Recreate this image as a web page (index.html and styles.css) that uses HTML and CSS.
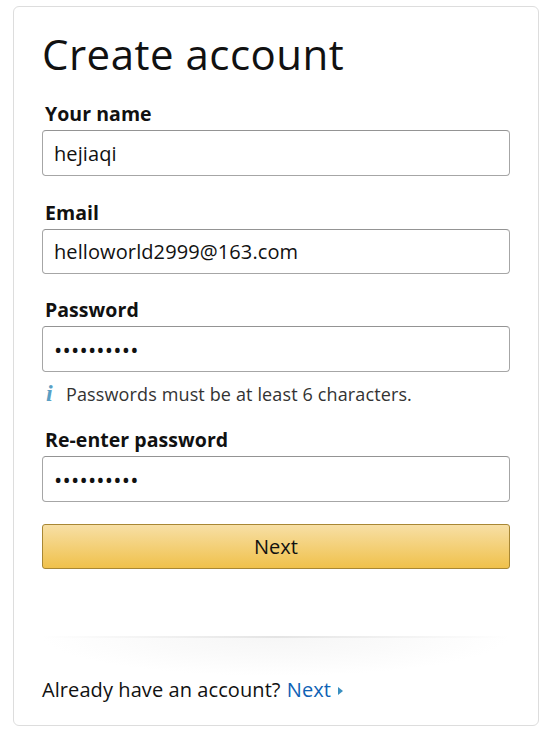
FILE: index.html
```html
<!DOCTYPE html>
<html lang="en">

<head>
    <meta charset="UTF-8">
    <meta name="viewport" content="width=device-width, initial-scale=1.0">
    <title>Create account</title>
    <link rel="stylesheet" href="styles.css">
</head>

<body>
    <div class="card">
        <h1>Create account</h1>
        <form id="registerForm">
            <div class="form-group">
                <label for="name">Your name</label>
                <input type="text" id="name" value="hejiaqi">
            </div>
            <div class="form-group form-group-email">
                <label for="email">Email</label>
                <input type="text" id="email" value="helloworld2999@163.com">
            </div>
            <div class="form-group form-group-password">
                <label for="password">Password</label>
                <input type="password" id="password" value="helloworld">
                <div class="hint"><span class="hint-icon">i</span>Passwords must be at least 6 characters.</div>
            </div>
            <div class="form-group form-group-repeat">
                <label for="repeat">Re-enter password</label>
                <input type="password" id="repeat" value="helloworld">
            </div>
            <button type="submit">Next</button>
        </form>
        <div class="divider"></div>
        <p class="signin">Already have an account? <a href="#">Next</a><span class="caret"></span></p>
    </div>
</body>

</html>
```

FILE: styles.css
```css
* {
    box-sizing: border-box;
}

html,
body {
    height: 100%;
}

body {
    font-family: "Open Sans", "Noto Sans", Arial, sans-serif;
    color: #111;
    background-color: #fff;
    margin: 0;
    padding: 6px 11px 6px 13px;
}

.card {
    height: 720px;
    padding: 23px 28px 0;
    border: 1px solid #ddd;
    border-radius: 6px;
}

h1 {
    font-size: 42px;
    font-weight: 400;
    line-height: 48px;
    margin: 0 0 23px;
    letter-spacing: 0.5px;
}

label {
    display: block;
    margin: 0 0 3px 3px;
    font-size: 19.5px;
    font-weight: 700;
    line-height: 26px;
    letter-spacing: 0.05px;
}

input {
    display: block;
    width: 468px;
    height: 46px;
    padding: 0 11px;
    font-family: inherit;
    font-size: 20px;
    color: #111;
    border: 1px solid #a6a6a6;
    border-top-color: #949494;
    border-radius: 4px;
    letter-spacing: 0.1px;
    outline: none;
}

input[type="password"] {
    font-size: 22px;
    letter-spacing: 0.2px;
}

.form-group {
    margin-bottom: 24px;
}

.form-group-email {
    margin-bottom: 23px;
}

.form-group-email input {
    height: 45px;
}

.form-group-password {
    margin-bottom: 12px;
}

.form-group-repeat {
    margin-bottom: 22px;
}

.hint {
    display: flex;
    align-items: center;
    height: 43px;
    font-size: 18px;
    color: #333;
    letter-spacing: 0.13px;
}

.hint-icon {
    width: 24px;
    padding-left: 4px;
    font-family: "Liberation Serif", serif;
    font-size: 24px;
    font-style: italic;
    font-weight: 700;
    color: #5a9fc4;
}

button {
    display: block;
    width: 468px;
    height: 45px;
    font-family: inherit;
    font-size: 20px;
    color: #111;
    background: linear-gradient(#f7dfa5, #f0c14b);
    border: 1px solid #a88734;
    border-radius: 3px;
    cursor: pointer;
}

.divider {
    height: 40px;
    margin: 67px 0 0;
    background:
        linear-gradient(90deg, #fff 0, #e4e4e4 50%, #fff 100%) top / 100% 2px no-repeat,
        radial-gradient(ellipse 50% 100% at 50% 0, #f6f6f6 0, #fafafa 50%, #fff 100%);
}

.signin {
    margin: 0;
    font-size: 20px;
    line-height: 28px;
    letter-spacing: 0.08px;
}

a {
    margin-left: 1px;
    color: #0f62b5;
    text-decoration: none;
}

.caret {
    display: inline-block;
    margin-left: 7px;
    vertical-align: 2px;
    border-left: 5px solid #3a8fc0;
    border-top: 4px solid transparent;
    border-bottom: 4px solid transparent;
}
```
